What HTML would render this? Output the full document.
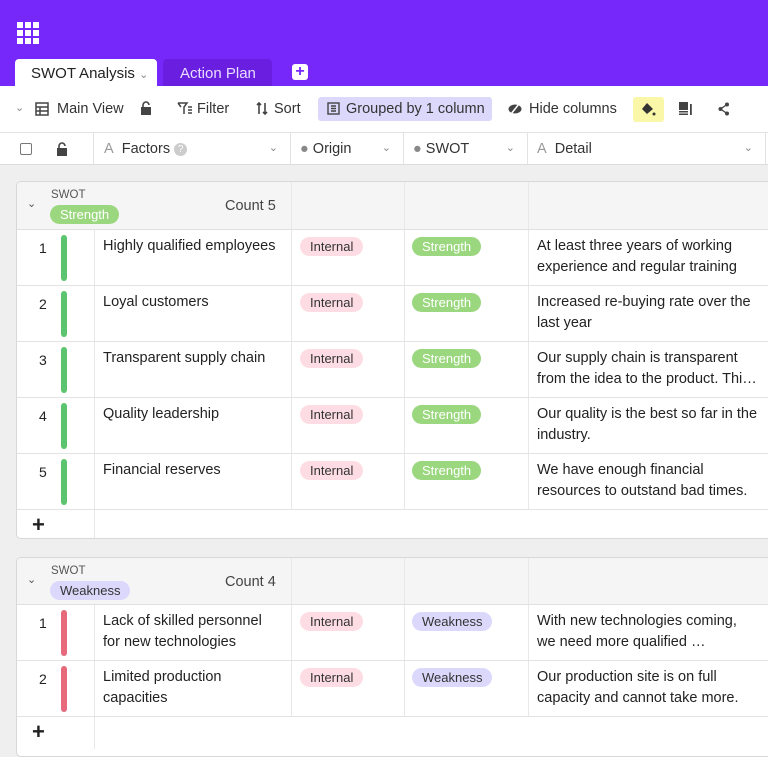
<!DOCTYPE html>
<html><head><meta charset="utf-8"><style>
*{box-sizing:border-box;margin:0;padding:0}
body{width:768px;height:749px;overflow:hidden;background:#efefef;font-family:"Liberation Sans",sans-serif;color:#222;position:relative;font-size:14px}
.abs{position:absolute}
.top{left:0;top:0;width:768px;height:86px;background:#7628fb}
.tab1{left:15px;top:59px;width:142px;height:27px;background:#fff;border-radius:4px 4px 0 0;font-size:15px;padding:6px 0 0 16px}
.tab2{left:163px;top:59px;width:109px;height:27px;background:#6a1fe0;border-radius:4px 4px 0 0;color:#e8dcff;font-size:15px;padding:6px 0 0 17px}
.tb{left:0;top:86px;width:768px;height:46px;background:#fff}
.tbi{position:absolute;top:15px;font-size:14.5px;color:#333}
.hdr{left:0;top:132px;width:768px;height:33px;background:#fff;border-top:1px solid #e3e3e3;border-bottom:1px solid #dcdcdc}
.hc{position:absolute;top:0;height:32px;border-right:1px solid #e3e3e3;font-size:14.5px;padding-top:8px;color:#333}
.box{position:absolute;left:16px;width:760px;background:#fff;border:1px solid #d8d8d8;border-radius:5px;overflow:hidden}
.gh{position:absolute;left:0;top:0;width:100%;height:48px;background:#f5f5f5;border-bottom:1px solid #e0e0e0}
.row{position:absolute;left:0;width:100%;height:56px;border-bottom:1px solid #e3e3e3}
.c{position:absolute;top:0;height:100%;border-right:1px solid #e8e8e8}
.num{position:absolute;left:22px;top:10px;font-size:14px}
.bar{position:absolute;left:44px;top:5px;width:6px;height:46px;border-radius:3px}
.txt{position:absolute;font-size:14.5px;line-height:21px;color:#222}
.pill{position:absolute;top:7px;height:19px;border-radius:10px;font-size:13px;padding:2px 10px 0;line-height:16px}
.int{background:#fddde3;color:#333}
.str{background:#9bd77f;color:#fff}
.wk{background:#dcd8fb;color:#333}
</style></head><body>
<div class="abs top"></div>
<svg class="abs" style="left:17px;top:22px" width="22" height="22" viewBox="0 0 22 22" fill="#fff"><rect x="0" y="0" width="6" height="6"/><rect x="8" y="0" width="6" height="6"/><rect x="16" y="0" width="6" height="6"/><rect x="0" y="8" width="6" height="6"/><rect x="8" y="8" width="6" height="6"/><rect x="16" y="8" width="6" height="6"/><rect x="0" y="16" width="6" height="6"/><rect x="8" y="16" width="6" height="6"/><rect x="16" y="16" width="6" height="6"/></svg>
<div class="abs tab1">SWOT Analysis <span style="font-size:11px;color:#888">⌄</span></div>
<div class="abs tab2">Action Plan</div>
<div class="abs" style="left:292px;top:64px;width:16px;height:16px;background:#fff;border-radius:3px;color:#7628fb;font-weight:bold;text-align:center;line-height:16px;font-size:16px">+</div>
<div class="abs tb">
<span class="tbi" style="left:15px;color:#888;font-size:11px;top:15px">⌄</span>
<svg class="tbi" style="left:35px;top:16px" width="14" height="14" viewBox="0 0 14 14" fill="none" stroke="#444" stroke-width="1.5"><rect x="1" y="1" width="12" height="12"/><path d="M1 5h12M1 9h12M5 5v8"/></svg>
<span class="tbi" style="left:57px">Main View</span>
<svg class="tbi" style="left:140px;top:15px" width="12" height="14" viewBox="0 0 12 14"><rect x="1" y="6" width="10" height="8" fill="#444"/><path d="M3 6V4a3 3 0 0 1 6 0" stroke="#444" stroke-width="1.6" fill="none"/></svg>
<svg class="tbi" style="left:177px;top:16px" width="16" height="13" viewBox="0 0 16 13" fill="none" stroke="#444" stroke-width="1.5"><path d="M1 1h9L7 5v7M4 5L1 1"/><path d="M11 5h4M11 8h4M11 11h4"/></svg>
<span class="tbi" style="left:197px">Filter</span>
<svg class="tbi" style="left:256px;top:16px" width="12" height="13" viewBox="0 0 12 13" fill="none" stroke="#444" stroke-width="1.6"><path d="M3 1v11M1 3l2-2 2 2M9 1v11M7 10l2 2 2-2"/></svg>
<span class="tbi" style="left:274px">Sort</span>
<div class="abs" style="left:318px;top:11px;width:174px;height:24px;background:#dcd8fb;border-radius:3px"></div>
<svg class="tbi" style="left:327px;top:16px" width="13" height="13" viewBox="0 0 13 13" fill="none" stroke="#444" stroke-width="1.4"><rect x="1" y="1" width="11" height="11"/><path d="M4 4h5M4 6.5h5M4 9h5"/></svg>
<span class="tbi" style="left:346px">Grouped by 1 column</span>
<svg class="tbi" style="left:508px;top:17px" width="14" height="12" viewBox="0 0 14 12"><ellipse cx="7" cy="6" rx="6.5" ry="4.5" fill="#444"/><path d="M3 11L11 1" stroke="#fff" stroke-width="1.5"/></svg>
<span class="tbi" style="left:529px">Hide columns</span>
<div class="abs" style="left:633px;top:11px;width:31px;height:25px;background:#fbf7a9;border-radius:3px"></div>
<svg class="tbi" style="left:641px;top:16px" width="15" height="15" viewBox="0 0 15 15"><path d="M6 1L1 7l5 5 6-5z" fill="#333"/><circle cx="13" cy="12" r="1.5" fill="#333"/></svg>
<svg class="tbi" style="left:679px;top:16px" width="14" height="13" viewBox="0 0 14 13" fill="#444"><rect x="0" y="0" width="9" height="8"/><rect x="0" y="9" width="9" height="1.5"/><rect x="0" y="11.5" width="9" height="1.5"/><rect x="11" y="2" width="1.8" height="11"/></svg>
<svg class="tbi" style="left:718px;top:16px" width="12" height="14" viewBox="0 0 12 14"><circle cx="9" cy="2.5" r="2" fill="#444"/><circle cx="2.5" cy="7" r="2" fill="#444"/><circle cx="9" cy="11.5" r="2" fill="#444"/><path d="M9 2.5L2.5 7 9 11.5" stroke="#444" stroke-width="1.3" fill="none"/></svg>
</div>
<div class="abs hdr">
<div class="hc" style="left:0;width:94px"><span style="position:absolute;left:20px;top:10px;width:12px;height:12px;border:1px solid #777;border-radius:2px"></span><svg style="position:absolute;left:56px;top:9px" width="12" height="14" viewBox="0 0 12 14"><rect x="1" y="6" width="10" height="8" fill="#444"/><path d="M3 6V4a3 3 0 0 1 6 0" stroke="#444" stroke-width="1.6" fill="none"/></svg></div>
<div class="hc" style="left:94px;width:197px;padding-left:10px"><span style="color:#999">A</span>&nbsp; Factors <span style="display:inline-block;width:13px;height:13px;border-radius:50%;background:#ccc;color:#fff;font-size:10px;text-align:center;line-height:13px;vertical-align:1px">?</span><span style="position:absolute;right:12px;color:#888;font-size:11px">⌄</span></div>
<div class="hc" style="left:291px;width:113px;padding-left:9px"><span style="color:#888">●</span> Origin<span style="position:absolute;right:12px;color:#888;font-size:11px">⌄</span></div>
<div class="hc" style="left:404px;width:124px;padding-left:9px"><span style="color:#888">●</span> SWOT<span style="position:absolute;right:12px;color:#888;font-size:11px">⌄</span></div>
<div class="hc" style="left:528px;width:238px;padding-left:9px"><span style="color:#999">A</span>&nbsp; Detail<span style="position:absolute;right:12px;color:#888;font-size:11px">⌄</span></div>
</div>

<div class="box" style="top:181px;height:358px">
<div class="gh">
<span class="abs" style="left:10px;top:15px;font-size:11px;color:#555">⌄</span>
<span class="abs" style="left:34px;top:7px;font-size:11.5px;color:#555">SWOT</span>
<span class="abs" style="left:33px;top:23px;height:19px;padding:2px 10px;border-radius:10px;background:#9bd77f;color:#fff;font-size:13px;line-height:16px">Strength</span>
<span class="abs" style="left:208px;top:16px;font-size:14.5px;color:#444">Count 5</span>
<div class="c" style="left:274px;width:0"></div><div class="c" style="left:387px;width:0"></div><div class="c" style="left:511px;width:0"></div>
</div>
<div class="row" style="top:48px"><div class="c" style="left:0;width:78px"><span class="num">1</span><span class="bar" style="background:#5cc46e"></span></div><div class="c" style="left:78px;width:197px"><span class="txt" style="left:8px;top:6px">Highly qualified employees</span></div><div class="c" style="left:275px;width:113px"><span class="pill int" style="left:8px">Internal</span></div><div class="c" style="left:388px;width:124px"><span class="pill str" style="left:7px">Strength</span></div><span class="txt" style="left:520px;top:6px">At least three years of working<br>experience and regular training</span></div>
<div class="row" style="top:104px"><div class="c" style="left:0;width:78px"><span class="num">2</span><span class="bar" style="background:#5cc46e"></span></div><div class="c" style="left:78px;width:197px"><span class="txt" style="left:8px;top:6px">Loyal customers</span></div><div class="c" style="left:275px;width:113px"><span class="pill int" style="left:8px">Internal</span></div><div class="c" style="left:388px;width:124px"><span class="pill str" style="left:7px">Strength</span></div><span class="txt" style="left:520px;top:6px">Increased re-buying rate over the<br>last year</span></div>
<div class="row" style="top:160px"><div class="c" style="left:0;width:78px"><span class="num">3</span><span class="bar" style="background:#5cc46e"></span></div><div class="c" style="left:78px;width:197px"><span class="txt" style="left:8px;top:6px">Transparent supply chain</span></div><div class="c" style="left:275px;width:113px"><span class="pill int" style="left:8px">Internal</span></div><div class="c" style="left:388px;width:124px"><span class="pill str" style="left:7px">Strength</span></div><span class="txt" style="left:520px;top:6px">Our supply chain is transparent<br>from the idea to the product. Thi…</span></div>
<div class="row" style="top:216px"><div class="c" style="left:0;width:78px"><span class="num">4</span><span class="bar" style="background:#5cc46e"></span></div><div class="c" style="left:78px;width:197px"><span class="txt" style="left:8px;top:6px">Quality leadership</span></div><div class="c" style="left:275px;width:113px"><span class="pill int" style="left:8px">Internal</span></div><div class="c" style="left:388px;width:124px"><span class="pill str" style="left:7px">Strength</span></div><span class="txt" style="left:520px;top:6px">Our quality is the best so far in the<br>industry.</span></div>
<div class="row" style="top:272px"><div class="c" style="left:0;width:78px"><span class="num">5</span><span class="bar" style="background:#5cc46e"></span></div><div class="c" style="left:78px;width:197px"><span class="txt" style="left:8px;top:6px">Financial reserves</span></div><div class="c" style="left:275px;width:113px"><span class="pill int" style="left:8px">Internal</span></div><div class="c" style="left:388px;width:124px"><span class="pill str" style="left:7px">Strength</span></div><span class="txt" style="left:520px;top:6px">We have enough financial<br>resources to outstand bad times.</span></div>
<div class="row" style="top:328px;height:30px;border:none"><div class="c" style="left:0;width:78px"><span class="abs" style="left:15px;top:2px;font-size:22px;font-weight:bold">+</span></div></div>
</div>

<div class="box" style="top:557px;height:200px">
<div class="gh" style="height:47px">
<span class="abs" style="left:10px;top:15px;font-size:11px;color:#555">⌄</span>
<span class="abs" style="left:34px;top:7px;font-size:11.5px;color:#555">SWOT</span>
<span class="abs" style="left:33px;top:23px;height:19px;padding:2px 10px;border-radius:10px;background:#dcd8fb;color:#333;font-size:13px;line-height:16px">Weakness</span>
<span class="abs" style="left:208px;top:16px;font-size:14.5px;color:#444">Count 4</span>
<div class="c" style="left:274px;width:0"></div><div class="c" style="left:387px;width:0"></div><div class="c" style="left:511px;width:0"></div>
</div>
<div class="row" style="top:47px"><div class="c" style="left:0;width:78px"><span class="num">1</span><span class="bar" style="background:#e66a7c"></span></div><div class="c" style="left:78px;width:197px"><span class="txt" style="left:8px;top:6px">Lack of skilled personnel<br>for new technologies</span></div><div class="c" style="left:275px;width:113px"><span class="pill int" style="left:8px">Internal</span></div><div class="c" style="left:388px;width:124px"><span class="pill wk" style="left:7px">Weakness</span></div><span class="txt" style="left:520px;top:6px">With new technologies coming,<br>we need more qualified …</span></div>
<div class="row" style="top:103px"><div class="c" style="left:0;width:78px"><span class="num">2</span><span class="bar" style="background:#e66a7c"></span></div><div class="c" style="left:78px;width:197px"><span class="txt" style="left:8px;top:6px">Limited production<br>capacities</span></div><div class="c" style="left:275px;width:113px"><span class="pill int" style="left:8px">Internal</span></div><div class="c" style="left:388px;width:124px"><span class="pill wk" style="left:7px">Weakness</span></div><span class="txt" style="left:520px;top:6px">Our production site is on full<br>capacity and cannot take more.</span></div>
<div class="row" style="top:159px;height:32px;border:none"><div class="c" style="left:0;width:78px"><span class="abs" style="left:15px;top:2px;font-size:22px;font-weight:bold">+</span></div></div>
</div>
</body></html>
